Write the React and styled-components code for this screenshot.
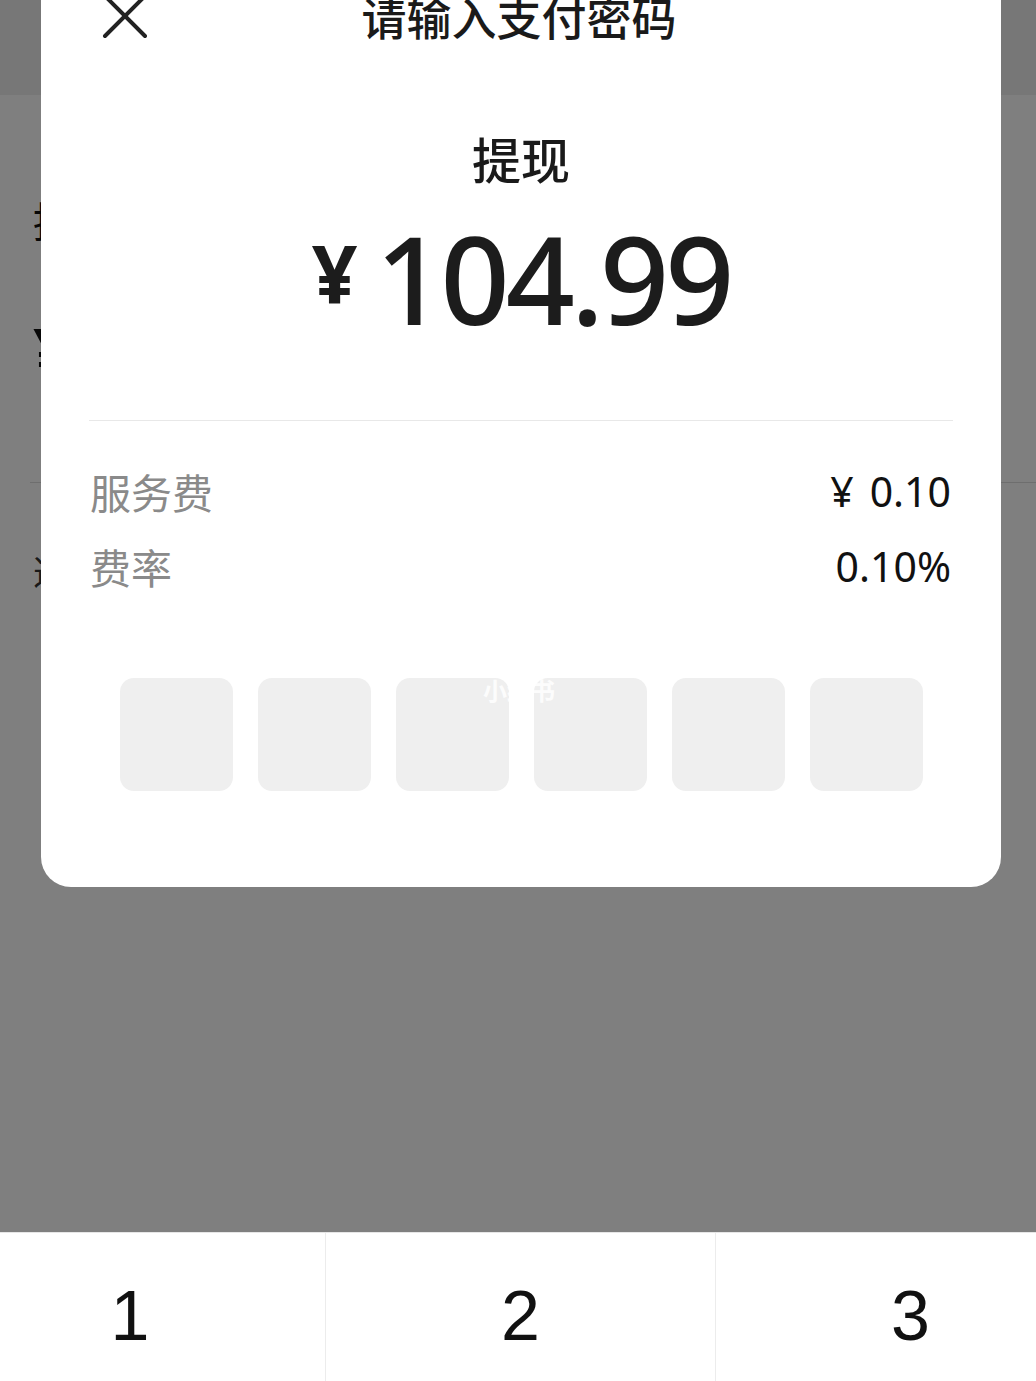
import React from 'react';
import styled, { createGlobalStyle } from 'styled-components';

const GlobalStyle = createGlobalStyle`
    html, body {
        margin: 0;
        padding: 0;
        background: #fff;
    }
    body {
        font-family: "Noto Sans", "Noto Sans CJK SC", sans-serif;
        color: #111;
    }
`;

const Page = styled.div`
    position: relative;
    width: 1036px;
    height: 1381px;
    overflow: hidden;
    background: #fff;
`;

const NavBar = styled.div`
    height: 95px;
    background: #eeeeee;
`;

const PageBody = styled.div`
    padding: 95px 0 0 33px;
    display: flex;
    flex-direction: column;
`;

const PageTitle = styled.div`
    font-family: "Noto Sans CJK SC", sans-serif;
    font-size: 42px;
    line-height: 60px;
    color: #111;
`;

const PageAmount = styled.div`
    margin-top: 60px;
    font-size: 64px;
    line-height: 80px;
    font-weight: 600;
`;

const PageDivider = styled.div`
    margin: 92px 0 0 -3px;
    height: 1px;
    background: #ddd;
`;

const PageHint = styled.div`
    margin-top: 68px;
    font-family: "Noto Sans CJK SC", sans-serif;
    font-size: 34px;
    line-height: 40px;
    color: #333;
`;

const Overlay = styled.div`
    position: absolute;
    inset: 0;
    background: rgba(0, 0, 0, 0.5);
    display: flex;
    flex-direction: column;
`;

const Sheet = styled.div`
    position: relative;
    margin: -40px 0 0 41px;
    width: 960px;
    background: #fff;
    border-radius: 0 0 30px 30px;
    padding-bottom: 96px;
    display: flex;
    flex-direction: column;
    align-items: center;
`;

const Header = styled.div`
    position: relative;
    align-self: stretch;
    height: 114px;
    display: flex;
    align-items: center;
    justify-content: center;
`;

const CloseButton = styled.div`
    position: absolute;
    left: 61px;
    top: 33px;
    width: 46px;
    height: 46px;
    color: #222;
`;

const Title = styled.div`
    font-family: "Noto Sans CJK SC", sans-serif;
    font-size: 45px;
    font-weight: 500;
    line-height: 60px;
    color: #1a1a1a;
    margin-left: -4px;
`;

const Subtitle = styled.div`
    margin-top: 54px;
    font-family: "Noto Sans CJK SC", sans-serif;
    font-size: 49px;
    font-weight: 500;
    line-height: 60px;
    color: #1a1a1a;
`;

const Amount = styled.div`
    margin-top: 30px;
    display: flex;
    align-items: flex-start;
    color: #1c1c1c;
    height: 120px;
`;

const Yen = styled.span`
    font-size: 80px;
    font-weight: 700;
    line-height: 80px;
    margin: 15px 18px 0 0;
`;

const Digits = styled.span`
    font-size: 121px;
    font-weight: 500;
    line-height: 120px;
    letter-spacing: -4px;
`;

const Divider = styled.div`
    margin-top: 82px;
    align-self: stretch;
    margin-left: 48px;
    margin-right: 48px;
    height: 1px;
    background: #e8e8e8;
`;

const InfoList = styled.div`
    margin-top: 40px;
    align-self: stretch;
    padding: 0 50px 0 49px;
    display: flex;
    flex-direction: column;
    gap: 15px;
`;

const InfoRow = styled.div`
    display: flex;
    justify-content: space-between;
    align-items: center;
    height: 60px;
`;

const InfoLabel = styled.span`
    font-family: "Noto Sans CJK SC", sans-serif;
    font-size: 41px;
    color: #8a8a8a;
`;

const InfoValue = styled.span`
    display: flex;
    gap: 16px;
    font-size: 41px;
    color: #111;
`;

const Boxes = styled.div`
    margin-top: 82px;
    display: flex;
    gap: 25px;
`;

const Box = styled.div`
    width: 113px;
    height: 113px;
    border-radius: 14px;
    background: #efefef;
`;

const Watermark = styled.div`
    position: absolute;
    left: 483px;
    top: 672px;
    font-family: "Noto Sans CJK SC", sans-serif;
    font-size: 24px;
    font-weight: 700;
    color: rgba(255, 255, 255, 0.85);
`;

const Keypad = styled.div`
    margin-top: auto;
    height: 148px;
    overflow: hidden;
    background: #fff;
    border-top: 1px solid #e6e6e6;
`;

const KeyRow = styled.div`
    margin-left: -65px;
    width: 1170px;
    display: grid;
    grid-template-columns: repeat(3, 390px);
`;

const Key = styled.div`
    height: 170px;
    display: flex;
    align-items: center;
    justify-content: center;
    font-family: "Liberation Sans", sans-serif;
    font-size: 70px;
    color: #111;
    padding-bottom: 4px;
    box-sizing: border-box;
    & + & {
        border-left: 1px solid #ececec;
    }
`;

function CloseIcon() {
    return (
        <svg width="46" height="46" viewBox="0 0 46 46" fill="none" stroke="currentColor" strokeWidth="4" strokeLinecap="round">
            <path d="M3 3 L43 43 M43 3 L3 43" />
        </svg>
    );
}

const fees = [
    { label: '服务费', value: ['¥', '0.10'] },
    { label: '费率', value: ['0.10%'] },
];

export default function App() {
    return (
        <Page>
            <GlobalStyle />
            <NavBar />
            <PageBody>
                <PageTitle>提现金额</PageTitle>
                <PageAmount>¥</PageAmount>
                <PageDivider />
                <PageHint>选择到账方式</PageHint>
            </PageBody>
            <Overlay>
                <Sheet>
                    <Header>
                        <CloseButton><CloseIcon /></CloseButton>
                        <Title>请输入支付密码</Title>
                    </Header>
                    <Subtitle>提现</Subtitle>
                    <Amount>
                        <Yen>¥</Yen>
                        <Digits>104.99</Digits>
                    </Amount>
                    <Divider />
                    <InfoList>
                        {fees.map(f => (
                            <InfoRow key={f.label}>
                                <InfoLabel>{f.label}</InfoLabel>
                                <InfoValue>
                                    {f.value.map(v => <span key={v}>{v}</span>)}
                                </InfoValue>
                            </InfoRow>
                        ))}
                    </InfoList>
                    <Boxes>
                        {[0, 1, 2, 3, 4, 5].map(i => <Box key={i} />)}
                    </Boxes>
                </Sheet>
                <Watermark>小红书</Watermark>
                <Keypad>
                    <KeyRow>
                        <Key>1</Key>
                        <Key>2</Key>
                        <Key>3</Key>
                    </KeyRow>
                </Keypad>
            </Overlay>
        </Page>
    );
}
